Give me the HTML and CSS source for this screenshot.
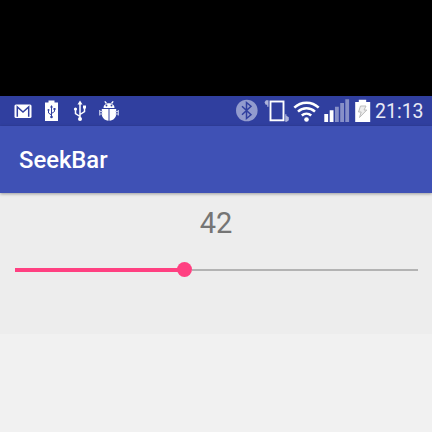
FILE: index.html
```html
<!DOCTYPE html>
<html lang="en">
<head>
<meta charset="utf-8">
<title>SeekBar</title>
<link rel="stylesheet" href="styles.css">
</head>
<body>
<div class="letterbox"></div>
<header class="status-bar">
  <div class="icons notifications">
    <svg width="18" height="30" viewBox="14 96 18 30"><rect x="14.5" y="104.5" width="17" height="13.5" rx="1.500" fill="#fff"/><path d="M17.300 116.800V107l5.700 5 5.700-5v9.800" fill="none" stroke="#303f9f" stroke-width="1.500"/></svg>
    <svg width="14" height="30" viewBox="45 96 14 30"><path d="M48.500 100.500h6v2H58V121H45v-18.500h3.500z" fill="#fff"/><g fill="none" stroke="#303f9f" stroke-width="1"><path d="M51.500 106.500V117M51.500 115l-3-2v-3M51.500 113.500l3-2V109"/></g><path d="M50 107.500l1.500-2.500 1.500 2.500z" fill="#303f9f"/><circle cx="51.500" cy="117" r="1.300" fill="#303f9f"/><circle cx="48.500" cy="110" r="1" fill="#303f9f"/><path d="M53.500 108h2v2h-2z" fill="#303f9f"/></svg>
    <svg width="14" height="30" viewBox="73 96 14 30"><path d="M80 103.500V119M80 116.500l-4.500-3v-4M80 114.500l4.500-3v-4" fill="none" stroke="#fff" stroke-width="1.500"/><path d="M77.500 104.500l2.500-4 2.500 4z" fill="#fff"/><circle cx="80" cy="119" r="2" fill="#fff"/><circle cx="75.500" cy="109" r="1.600" fill="#fff"/><path d="M83 105.500h3v3h-3z" fill="#fff"/></svg>
    <svg width="20" height="30" viewBox="99 96 20 30"><path d="M104.800 101.300l1.700 2.200M113.200 101.300l-1.700 2.200" fill="none" stroke="#fff" stroke-width="1.300"/><path d="M103.500 107.900c0-6.200 11-6.200 11 0z" fill="#fff"/><path d="M101.800 109h6.700v11.700c-4-.3-6.700-3.200-6.700-7zM109.500 109h6.700v4.700c0 3.800-2.700 6.700-6.700 7z" fill="#fff"/><path d="M99.700 110v5.500M118.300 110v5.500M99.700 111.500h3M99.700 114h3M118.300 111.500h-3M118.300 114h-3" stroke="#c7cce8" stroke-width="1.200"/><circle cx="106.500" cy="105.500" r=".9" fill="#303f9f"/><circle cx="111.500" cy="105.500" r=".9" fill="#303f9f"/></svg>
  </div>
  <div class="icons system">
    <svg width="22" height="30" viewBox="236 96 22 30"><circle cx="246.800" cy="110.500" r="10.800" fill="#929bce"/><path d="M242 106.200l9 8.500-4.500 3.800v-16l4.500 3.700-9 8.500" fill="none" stroke="#303f9f" stroke-width="1.500"/></svg>
    <svg class="rotate" width="26" height="30" viewBox="264 96 26 30"><rect x="270.500" y="101.500" width="13" height="18.800" fill="none" stroke="#fff" stroke-width="1.900"/><path d="M268.500 100.300v6.500h-1.300v-2h-1.500l-1.200-2.500 1.500-2z" fill="#aeb4da"/><path d="M285.200 114.300h1.200v1.500l2.400 1.500v3l-2 1.500h-1.600z" fill="#aeb4da"/></svg>
    <svg class="wifi" width="28" height="30" viewBox="292 96 28 30"><g fill="none" stroke="#fff" stroke-width="2.500"><path d="M294.300 107.700c6.800-6.700 17.600-6.700 24.400 0M298 111.700c4.800-4.500 12.200-4.500 17 0M301.800 115.500c2.700-2.400 6.700-2.400 9.400 0"/></g><circle cx="306.500" cy="119.500" r="2.300" fill="#fff"/></svg>
    <svg class="signal" width="26" height="30" viewBox="324 96 26 30"><path d="M324.300 114h3.800v8h-3.800zM329.700 110.200h3.800V122h-3.800z" fill="#fff"/><path d="M335 106.700h3.800V122H335zM340.200 103h3.800v19h-3.800zM345.300 99.300h3.800V122h-3.800z" fill="#8790c8"/></svg>
    <svg class="battery" width="16" height="30" viewBox="355 96 16 30"><path d="M358.800 99.800h7.400v2.200h4v20h-15v-20h3.600z" fill="#fff"/><path d="M360.500 106h5.500l-2 4h2.800l-7.300 7.500 1.700-5.500h-2.700z" fill="#ededed" stroke="#bbb" stroke-width="1"/></svg>
    <span class="clock">21:13</span>
  </div>
</header>
<div class="app-bar"><h1>SeekBar</h1></div>
<main class="content">
  <div class="value">42</div>
  <div class="seekbar">
    <div class="progress"></div>
    <div class="thumb"></div>
    <div class="track"></div>
  </div>
</main>
</body>
</html>
```

FILE: styles.css
```css
* { box-sizing: border-box; }
body {
  margin: 0;
  height: 432px;
  overflow: hidden;
  background: #f1f1f1;
  font-family: Roboto, sans-serif;
}
svg { display: block; flex: none; }
.letterbox { height: 96px; background: #000; }
.status-bar {
  height: 30px;
  padding: 0 8px 0 14px;
  display: flex;
  justify-content: space-between;
  background: #303f9f;
}
.icons { display: flex; }
.notifications { gap: 13px; }
.notifications svg:nth-child(3) { margin-left: 1px; }
.notifications svg:nth-child(4) { margin-left: -1px; }
.rotate { margin-left: 6px; }
.wifi { margin-left: 2px; }
.signal { margin-left: 4px; }
.battery { margin-left: 5px; }
.clock {
  width: 49px;
  margin-left: 4px;
  color: #e8eaf6;
  font-size: 19.5px;
  line-height: 32px;
  white-space: nowrap;
}
.app-bar {
  position: relative;
  height: 67px;
  padding: 1px 19px 0;
  display: flex;
  align-items: center;
  background: #3f51b5;
  box-shadow: 0 1px 3px rgba(0, 0, 0, .35);
}
h1 {
  margin: 0;
  color: #fff;
  font-size: 23.8px;
  font-weight: 500;
  line-height: 30px;
}
.content {
  height: 141px;
  padding: 13px 14px 0;
  background: #ededed;
}
.value {
  height: 34px;
  color: #757575;
  font-size: 29px;
  line-height: 34px;
  text-align: center;
}
.seekbar {
  height: 17px;
  margin-top: 21px;
  display: flex;
  align-items: center;
}
.progress { width: 163px; height: 4px; margin-left: 1px; background: #ff4081; }
.thumb { width: 15px; height: 15px; margin-left: -1px; border-radius: 50%; background: #ff4081; }
.track { flex: 1; height: 2px; background: #b3b3b3; }
```
